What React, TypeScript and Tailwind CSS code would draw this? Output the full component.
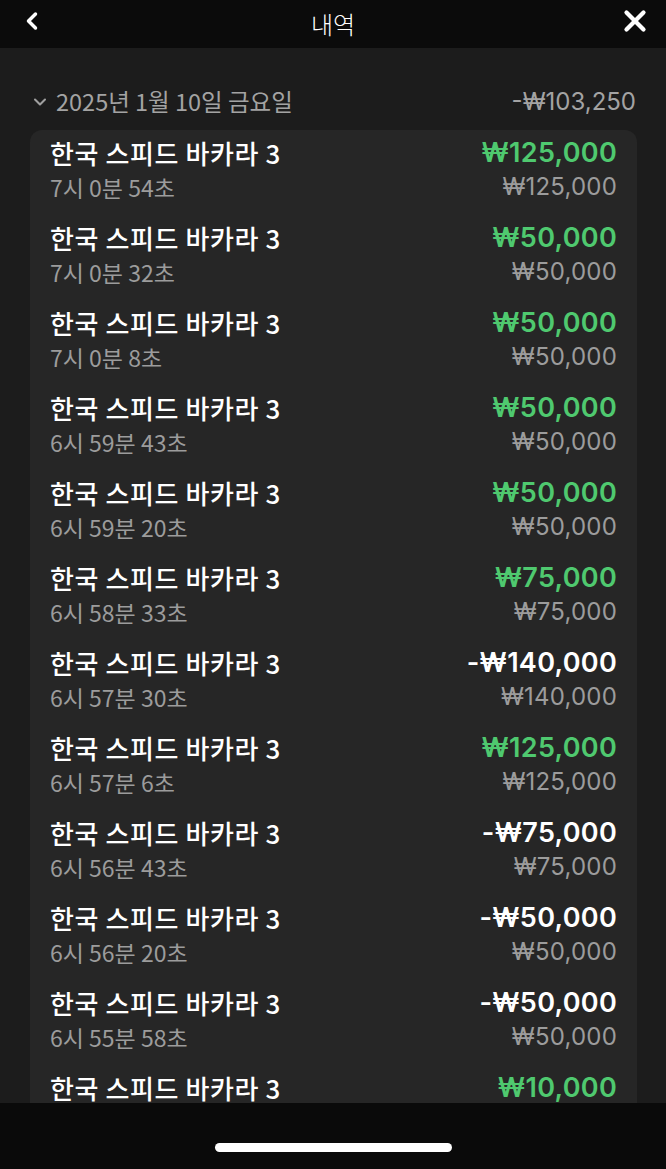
import { ChevronDown, ChevronLeft, X } from "lucide-react";

type Bet = {
    time: string;
    amount: string;
    stake: string;
    win: boolean;
};

const BETS: Bet[] = [
    { time: "7시 0분 54초", amount: "₩125,000", stake: "₩125,000", win: true },
    { time: "7시 0분 32초", amount: "₩50,000", stake: "₩50,000", win: true },
    { time: "7시 0분 8초", amount: "₩50,000", stake: "₩50,000", win: true },
    { time: "6시 59분 43초", amount: "₩50,000", stake: "₩50,000", win: true },
    { time: "6시 59분 20초", amount: "₩50,000", stake: "₩50,000", win: true },
    { time: "6시 58분 33초", amount: "₩75,000", stake: "₩75,000", win: true },
    { time: "6시 57분 30초", amount: "-₩140,000", stake: "₩140,000", win: false },
    { time: "6시 57분 6초", amount: "₩125,000", stake: "₩125,000", win: true },
    { time: "6시 56분 43초", amount: "-₩75,000", stake: "₩75,000", win: false },
    { time: "6시 56분 20초", amount: "-₩50,000", stake: "₩50,000", win: false },
    { time: "6시 55분 58초", amount: "-₩50,000", stake: "₩50,000", win: false },
    { time: "6시 55분 31초", amount: "₩10,000", stake: "₩10,000", win: true },
];

const KR = "font-['Noto_Sans_CJK_KR','Noto_Sans',sans-serif]";
const NUM = "font-['Inter','Noto_Sans_CJK_KR',sans-serif]";

function BetRow({ bet }: { bet: Bet }) {
    return (
        <div className="flex justify-between pb-[17px]">
            <div className={KR}>
                <div className="text-[26px] leading-[34px] font-medium tracking-[0.6px] text-white">
                    한국 스피드 바카라 3
                </div>
                <div className="text-[23px] leading-[34px] text-[#9c9c9c]">{bet.time}</div>
            </div>
            <div className={`${NUM} text-right`}>
                <div
                    className={`text-[27px] leading-[34px] font-semibold tracking-[0.3px] ${bet.win ? "text-[#4fc96f]" : "text-white"}`}
                >
                    {bet.amount}
                </div>
                <div className="text-[24px] leading-[34px] tracking-[0.2px] text-[#9c9c9c]">{bet.stake}</div>
            </div>
        </div>
    );
}

export default function App() {
    return (
        <div className="flex h-[1169px] w-full flex-col overflow-hidden bg-[#1c1c1c]">
            {/* Header */}
            <div className="relative flex h-12 shrink-0 items-center justify-center bg-[#0b0b0b]">
                <ChevronLeft className="absolute left-[18px] top-[7px] text-white" size={28} strokeWidth={3} />
                <span className={`${KR} text-[24px] font-light text-white`}>내역</span>
                <X className="absolute right-[14px] top-[4px] text-white" size={34} strokeWidth={3} />
            </div>

            {/* Content */}
            <div className="flex-1 overflow-hidden pt-[38px]">
                <div className="flex h-8 items-center justify-between pl-[30px] pr-[30px]">
                    <div className="flex items-center gap-[6px]">
                        <ChevronDown className="text-[#9f9f9f]" size={20} strokeWidth={2.5} />
                        <span className={`${KR} text-[23.5px] text-[#a3a3a3]`}>2025년 1월 10일 금요일</span>
                    </div>
                    <span className={`${NUM} text-[24px] text-[#a3a3a3]`}>-₩103,250</span>
                </div>
                <div className="ml-[30px] mr-[29px] mt-3 rounded-t-[12px] bg-[#262626] px-[20px] pt-[6px]">
                    {BETS.map((bet, i) => (
                        <BetRow key={i} bet={bet} />
                    ))}
                </div>
            </div>

            {/* Bottom bar */}
            <div className="flex h-[66px] shrink-0 items-end justify-center bg-[#0a0a0a] pb-[17px]">
                <div className="h-[9px] w-[237px] rounded-full bg-white" />
            </div>
        </div>
    );
}
